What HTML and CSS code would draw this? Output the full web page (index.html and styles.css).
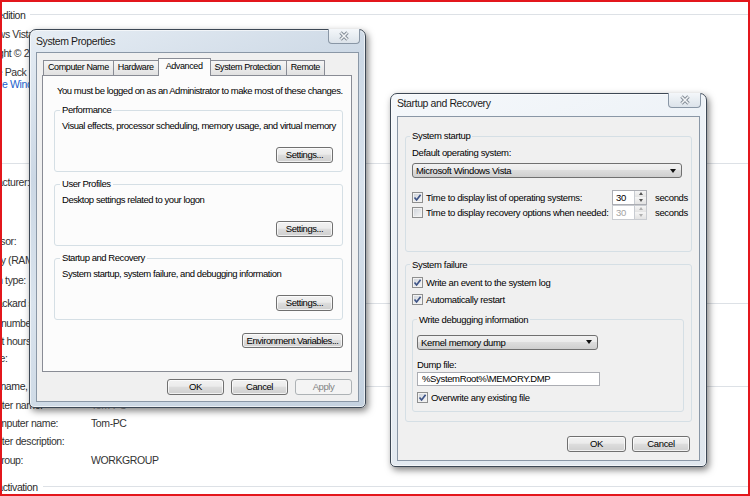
FILE: index.html
```html
<!DOCTYPE html>
<html lang="en">
<head>
<meta charset="utf-8">
<title>System Properties</title>
<link rel="stylesheet" href="styles.css">
</head>
<body>
<div class="screen">
  <main class="page">
    <div class="heading"><span class="htext">Windows edition</span></div>
    <div class="sec sec-ed">
      <div class="row"><span class="full">Windows Vista™ Home Premium</span></div>
      <div class="row"><span class="full">Copyright © 2007 Microsoft Corporation. All rights reserved.</span></div>
      <div class="row"><span class="full">Service Pack 2</span></div>
      <div class="row row-link"><span class="full link">Upgrade Windows Vista</span></div>
    </div>
    <div class="heading h-system"><span class="htext">System</span></div>
    <div class="sec sec-sys">
      <div class="row"><span class="lbl">Manufacturer:</span><span class="val">Hewlett-Packard</span></div>
      <div class="row"><span class="lbl">Model:</span><span class="val">HP Pavilion dv6500</span></div>
      <div class="row"><span class="lbl">Rating:</span><span class="val">Windows Experience Index</span></div>
      <div class="row"><span class="lbl">Processor:</span><span class="val">Intel(R) Core(TM)2 Duo CPU</span></div>
      <div class="row"><span class="lbl">Memory (RAM):</span><span class="val">2.00 GB</span></div>
      <div class="row"><span class="lbl">System type:</span><span class="val">32-bit Operating System</span></div>
    </div>
    <div class="heading h-hp"><span class="htext">Hewlett-Packard support</span></div>
    <div class="sec sec-hp">
      <div class="row"><span class="lbl">Phone number:</span><span class="val">1-800-474-6836</span></div>
      <div class="row"><span class="lbl">Support hours:</span><span class="val">24x7</span></div>
      <div class="row"><span class="lbl">Website:</span><span class="val">Online support</span></div>
    </div>
    <div class="heading h-comp"><span class="htext">Computer name, domain, and workgroup settings</span></div>
    <div class="sec sec-comp">
      <div class="row"><span class="lbl">Computer name:</span><span class="val faint">Tom-PC</span></div>
      <div class="row"><span class="lbl">Full computer name:</span><span class="val">Tom-PC</span></div>
      <div class="row"><span class="lbl">Computer description:</span><span class="val"></span></div>
      <div class="row"><span class="lbl lbl-wg">Workgroup:</span><span class="val">WORKGROUP</span></div>
    </div>
    <div class="heading h-act"><span class="htext">Windows activation</span></div>
  </main>

  <section class="win sysprops">
    <div class="titlebar">
      <span class="title">System Properties</span>
      <span class="close"><svg viewBox="0 0 12 10"><path class="xo" d="M2.5 1.5 9.5 8.5M9.5 1.5 2.5 8.5"/><path class="xi" d="M2.5 1.5 9.5 8.5M9.5 1.5 2.5 8.5"/></svg></span>
    </div>
    <div class="client">
      <div class="tabs">
        <span class="tab">Computer Name</span>
        <span class="tab">Hardware</span>
        <span class="tab sel">Advanced</span>
        <span class="tab tab-sp">System Protection</span>
        <span class="tab">Remote</span>
      </div>
      <div class="panel">
        <div class="intro">You must be logged on as an Administrator to make most of these changes.</div>
        <fieldset class="grp">
          <legend>Performance</legend>
          <div class="desc">Visual effects, processor scheduling, memory usage, and virtual memory</div>
          <div class="grp-btn"><button type="button" class="btn">Settings...</button></div>
        </fieldset>
        <fieldset class="grp">
          <legend>User Profiles</legend>
          <div class="desc">Desktop settings related to your logon</div>
          <div class="grp-btn"><button type="button" class="btn">Settings...</button></div>
        </fieldset>
        <fieldset class="grp">
          <legend>Startup and Recovery</legend>
          <div class="desc">System startup, system failure, and debugging information</div>
          <div class="grp-btn"><button type="button" class="btn">Settings...</button></div>
        </fieldset>
        <button type="button" class="btn env">Environment Variables...</button>
      </div>
      <div class="footer">
        <button type="button" class="btn">OK</button>
        <button type="button" class="btn">Cancel</button>
        <button type="button" class="btn" disabled>Apply</button>
      </div>
    </div>
  </section>

  <section class="win startup">
    <div class="titlebar">
      <span class="title">Startup and Recovery</span>
      <span class="close"><svg viewBox="0 0 12 10"><path class="xo" d="M2.5 1.5 9.5 8.5M9.5 1.5 2.5 8.5"/><path class="xi" d="M2.5 1.5 9.5 8.5M9.5 1.5 2.5 8.5"/></svg></span>
    </div>
    <div class="client">
      <fieldset class="grp g-start">
        <legend>System startup</legend>
        <div class="line">Default operating system:</div>
        <div class="combo combo-os"><span>Microsoft Windows Vista</span></div>
        <div class="spinrows">
          <span class="chkrow"><span class="cb"><svg viewBox="0 0 9 9"><path d="M1.5 4.5 3.6 7 7.6 1.7"/></svg></span>Time to display list of operating systems:</span>
          <span class="spin"><span class="num">30</span><span class="arrows"><i class="up"></i><i class="dn"></i></span></span>
          <span class="secs">seconds</span>
          <span class="chkrow"><span class="cb off"></span>Time to display recovery options when needed:</span>
          <span class="spin dis"><span class="num">30</span><span class="arrows"><i class="up"></i><i class="dn"></i></span></span>
          <span class="secs">seconds</span>
        </div>
      </fieldset>
      <fieldset class="grp g-fail">
        <legend>System failure</legend>
        <div class="chkrow"><span class="cb"><svg viewBox="0 0 9 9"><path d="M1.5 4.5 3.6 7 7.6 1.7"/></svg></span>Write an event to the system log</div>
        <div class="chkrow"><span class="cb"><svg viewBox="0 0 9 9"><path d="M1.5 4.5 3.6 7 7.6 1.7"/></svg></span>Automatically restart</div>
        <fieldset class="grp g-debug">
          <legend>Write debugging information</legend>
          <div class="combo combo-dump"><span>Kernel memory dump</span></div>
          <div class="line dump-lbl">Dump file:</div>
          <div class="field">%SystemRoot%\MEMORY.DMP</div>
          <div class="chkrow over"><span class="cb"><svg viewBox="0 0 9 9"><path d="M1.5 4.5 3.6 7 7.6 1.7"/></svg></span>Overwrite any existing file</div>
        </fieldset>
      </fieldset>
      <div class="footer">
        <button type="button" class="btn b-ok">OK</button>
        <button type="button" class="btn">Cancel</button>
      </div>
    </div>
  </section>
</div>
</body>
</html>
```
FILE: styles.css
```css
* { box-sizing: border-box; }
html, body { margin: 0; padding: 0; }
body {
  width: 750px; height: 496px; overflow: hidden; background: #fff;
  font-family: "Liberation Sans", Arial, sans-serif;
  color: #000;
}
.screen {
  position: relative; width: 750px; height: 496px;
  border: 2px solid #e3171c; overflow: hidden; background: #fff;
}

/* background control panel page */
.page { padding-top: 3px; font-size: 10.5px; letter-spacing: -0.4px; color: #333; }
.heading { display: flex; align-items: center; height: 19px; margin-left: -47px; color: #2a2a2a; }
.heading::after { content: ""; flex: 1; height: 1px; background: #dde1e6; margin-left: 5px; }
.htext { white-space: nowrap; }
.row { display: flex; align-items: center; height: 19px; margin-left: -32px; white-space: nowrap; }
.lbl { width: 121px; flex: none; overflow: hidden; }
.lbl-wg { text-indent: 3px; }
.val { color: #333; }
.val.faint { color: #9a9a9a; }
.link { color: #1b5fcc; }
.row-link { margin-top: -7px; }
.h-system { margin-top: 60.5px; }
.sec-sys .row { height: 19.5px; }
.h-hp { margin-top: 4px; }
.sec-hp { margin-top: 2px; }
.sec-hp .row { height: 17.5px; }
.h-comp { margin-top: 9.5px; }
.sec-comp .row { height: 18.3px; }
.h-act { margin-top: 8.8px; }

/* windows */
.win {
  position: absolute; display: flex; flex-direction: column;
  padding: 0 6px 5px;
  border: 1px solid #3d4855; border-radius: 7px 7px 5px 5px;
  box-shadow: inset 0 0 0 1px rgba(255,255,255,.6), 2px 3px 7px rgba(0,0,0,.5);
  font-size: 9.5px; letter-spacing: -0.35px; color: #000;
}
.sysprops {
  left: 27px; top: 27px; width: 337px; height: 379px;
  letter-spacing: -0.45px;
  background: linear-gradient(160deg, #e6edf4 0%, #ccd8e5 30%, #d9e3ed 55%, #c4d1df 100%);
}
.startup {
  left: 388px; top: 91px; width: 317px; height: 374px;
  background: linear-gradient(160deg, #f5f8fb 0%, #e8eef4 50%, #dfe6ed 100%);
}
.titlebar { display: flex; justify-content: space-between; align-items: flex-start; height: 22px; flex: none; }
.title { padding-top: 4px; font-size: 10.5px; letter-spacing: -0.4px; line-height: 14px; color: #1b1b1b; text-shadow: 0 0 5px #fff; white-space: nowrap; }
.startup .title { padding-top: 2px; }
.close {
  margin-top: -1px; margin-right: -1px; width: 32px; height: 15px;
  display: flex; align-items: center; justify-content: center;
  border: 1px solid #8996a5; border-top: none; border-radius: 0 0 4px 4px;
  background: linear-gradient(#f4f7fa, #dce3ea);
}
.startup .close { width: 33px; }
.close svg { width: 12px; height: 10px; fill: none; }
.close .xo { stroke: #838c96; stroke-width: 3.4; }
.close .xi { stroke: #f3f5f7; stroke-width: 1.5; }

.client {
  flex: 1; display: flex; flex-direction: column;
  background: #f0f0f0; border: 1px solid #8a97a6;
}
.sysprops .client { padding: 5px 6px 6px 5px; }

/* tabs */
.tabs { display: flex; align-items: flex-end; height: 18px; padding-left: 1px; margin-bottom: -1px; position: relative; z-index: 1; flex: none; }
.tab {
  height: 15px; margin-bottom: 1px; padding: 0 4px;
  border: 1px solid #898c95; border-bottom: none;
  background: linear-gradient(#f6f6f6, #e1e1e1);
  font-size: 9px; letter-spacing: -0.4px;
  line-height: 13px; white-space: nowrap;
}
.tab + .tab { margin-left: -1px; }
.tab.sel {
  height: 18px; margin: 0 -2px 0 -1px; padding: 0 7px;
  background: #fcfcfc; position: relative; z-index: 2; line-height: 15px;
}
.tab.tab-sp { padding: 0 5px 0 6px; }

.panel {
  flex: none; height: 297px; border: 1px solid #898c95; background: #fcfcfc;
  padding: 8px 8px 0 11px; display: flex; flex-direction: column;
}
.intro { margin-left: 3px; line-height: 14px; white-space: nowrap; }

.grp {
  margin: 5px 0 0; border: 1px solid #d5dfe5; border-radius: 3px;
  padding: 2px 9px 8px 7px; min-width: 0;
}
.grp legend { padding: 0 2px; margin-left: -2px; line-height: 14px; }
.desc { line-height: 14px; white-space: nowrap; }
.grp-btn { display: flex; justify-content: flex-end; margin-top: 14px; }

.btn {
  appearance: none; width: 57px; height: 16px; padding: 0;
  border: 1px solid #707070; border-radius: 3px;
  background: linear-gradient(#f2f2f2 0%, #ebebeb 45%, #dddddd 50%, #cfcfcf 100%);
  font: inherit; letter-spacing: inherit; line-height: 14px; color: #000; text-align: center;
  white-space: nowrap;
  box-shadow: inset 0 0 0 1px rgba(255,255,255,.7);
}
.btn:disabled { border-color: #adb2b5; background: #f4f4f4; color: #838383; box-shadow: none; }
.env { align-self: flex-end; margin-top: 13px; width: 101px; height: 15px; line-height: 13px; }

.footer { display: flex; justify-content: flex-end; gap: 7px; margin-top: 7px; }

/* startup and recovery */
.startup .client { padding: 12px 7px 0 7px; }
.g-start { margin-top: 0; padding: 3px 9px 31px 6px; }
.line { line-height: 14px; white-space: nowrap; }
.combo {
  display: flex; align-items: center; justify-content: space-between;
  height: 15px; border: 1px solid #707070; border-radius: 3px;
  background: linear-gradient(#f2f2f2 0%, #ebebeb 45%, #dddddd 50%, #cfcfcf 100%);
  padding: 0 5px 0 3px; white-space: nowrap;
}
.combo::after {
  content: ""; border-left: 3.5px solid transparent; border-right: 3.5px solid transparent;
  border-top: 4px solid #111;
}
.combo-os { margin-top: 3px; }
.spinrows {
  display: grid; grid-template-columns: 200px 35px auto; grid-auto-rows: 15px;
  align-items: center; margin-top: 11.5px;
}
.chkrow { display: flex; align-items: center; gap: 3px; white-space: nowrap; }
.g-fail .chkrow { height: 17px; }
.secs { margin-left: 8px; white-space: nowrap; }
.cb {
  width: 11px; height: 11px; flex: none;
  border: 1px solid #8e8f8f;
  background: linear-gradient(135deg, #cdd2d9, #f7f7f7);
  box-shadow: inset 0 0 0 1px #f2f2f2;
}
.cb svg { display: block; width: 9px; height: 9px; fill: none; stroke: #3d5386; stroke-width: 1.7; }
.spin { display: flex; height: 15px; border: 1px solid #abadb3; background: #fff; }
.num { flex: 1; padding-left: 3px; line-height: 13px; }
.arrows { width: 12px; display: flex; flex-direction: column; border-left: 1px solid #c8ccd2; }
.arrows i { flex: 1; display: flex; align-items: center; justify-content: center; background: linear-gradient(#f5f5f5, #e3e3e3); }
.arrows i::after { content: ""; border-left: 2.5px solid transparent; border-right: 2.5px solid transparent; }
.up::after { border-bottom: 3px solid #555; }
.dn::after { border-top: 3px solid #555; }
.spin.dis { border-color: #c9ccd1; color: #a3a3a3; }
.spin.dis .up::after { border-bottom-color: #b0b0b0; }
.spin.dis .dn::after { border-top-color: #b0b0b0; }

.g-fail { margin-top: 6px; padding: 2.5px 7px 9px 6px; }
.g-debug { margin-top: 4.5px; padding: 8px 9px 5px 4px; }
.g-debug legend { margin-left: 0; }
.combo-dump { width: 181px; }
.dump-lbl { margin-top: 8px; }
.field {
  width: 183px; height: 14px; border: 1px solid #abadb3; background: #fff;
  padding-left: 4px; line-height: 12px; white-space: nowrap;
}
.over { margin-top: 3.5px; }
.startup .footer { margin-top: 14px; gap: 6px; padding-right: 2px; }
.startup .btn { width: 58px; }
.startup .b-ok { width: 59px; }
```
